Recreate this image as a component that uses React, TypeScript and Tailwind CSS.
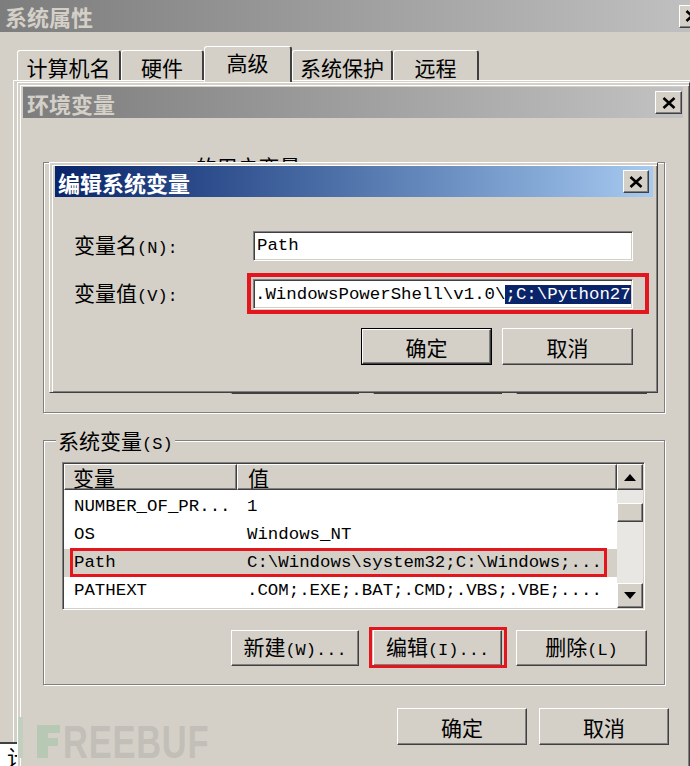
import React from "react";

const ZH = "font-['Noto_Sans_CJK_SC','Noto_Sans',sans-serif]";
const MONO = "font-['Liberation_Mono','Noto_Sans_CJK_SC',monospace]";

const RAISED =
  "border border-t-white border-l-white border-r-[#404040] border-b-[#404040] shadow-[inset_-1px_-1px_0_#808080]";
const SUNKEN =
  "border border-t-[#808080] border-l-[#808080] border-r-white border-b-white shadow-[inset_1px_1px_0_#404040,inset_-1px_-1px_0_#d4d0c8]";
const FRAME =
  "border border-t-white border-l-white border-r-[#404040] border-b-[#404040] shadow-[inset_2px_2px_0_#d4d0c8,inset_3px_3px_0_#ffffff,inset_-1px_-1px_0_#808080]";

function Mix({ zh, en, pre }: { zh: string; en?: string; pre?: string }) {
  return (
    <span className="inline-flex items-baseline whitespace-nowrap text-black leading-[28px]">
      {pre && <span className={`${MONO} text-[17px] leading-[28px]`}>{pre}</span>}
      <span className={`${ZH} text-[21px] leading-[28px]`}>{zh}</span>
      {en && <span className={`${MONO} text-[17px] leading-[28px]`}>{en}</span>}
    </span>
  );
}

function CloseBtn({ className }: { className: string }) {
  return (
    <div className={`flex items-center justify-center bg-[#d4d0c8] ${RAISED} ${className}`}>
      <svg width="14" height="12" viewBox="0 0 14 12">
        <path d="M1.5 1 L12.5 11 M12.5 1 L1.5 11" stroke="#000" strokeWidth="2.6" />
      </svg>
    </div>
  );
}

function Btn({
  children,
  className,
  def,
}: {
  children: React.ReactNode;
  className: string;
  def?: boolean;
}) {
  return (
    <div className={`flex bg-[#d4d0c8] ${def ? "border border-black" : ""} ${className}`}>
      <div className={`flex-1 flex items-center justify-center ${RAISED}`}>{children}</div>
    </div>
  );
}

function Tab({ label, w, sel }: { label: string; w: string; sel?: boolean }) {
  return (
    <div
      className={`${w} ${
        sel ? "h-[36px] -mb-[2px] pb-[5px]" : "h-[30px] pt-[3px]"
      } flex items-center justify-center bg-[#d4d0c8] border-t border-l border-white border-r-2 border-r-[#404040] rounded-t-[3px]`}
    >
      <span className={`${ZH} text-[21px] leading-[26px] text-black`}>{label}</span>
    </div>
  );
}

function Arrow({ up }: { up?: boolean }) {
  return (
    <svg width="12" height="7" viewBox="0 0 12 7">
      <polygon points={up ? "6,0 12,7 0,7" : "0,0 12,0 6,7"} fill="#000" />
    </svg>
  );
}

const rows: [string, string][] = [
  ["NUMBER_OF_PR...", "1"],
  ["OS", "Windows_NT"],
  ["Path", "C:\\Windows\\system32;C:\\Windows;..."],
  ["PATHEXT", ".COM;.EXE;.BAT;.CMD;.VBS;.VBE;...."],
];

const RED = "border-[#e3161d]";

export default function App() {
  return (
    <div className="relative w-[690px] h-[766px] overflow-hidden bg-[#d4d0c8] select-none">
      {/* Outer window: 系统属性 */}
      <div className="absolute left-0 top-0 w-[710px] h-[766px] flex flex-col">
        <div className="h-[32px] shrink-0 flex items-center pl-[5px] pr-[5px] bg-linear-to-r from-[#7d7d7d] to-[#c2c2c2]">
          <span className={`${ZH} text-[22px] font-bold leading-none text-[#d4d0c8]`}>系统属性</span>
          <CloseBtn className="ml-auto w-[26px] h-[23px]" />
        </div>
        <div className="mt-[18px] pl-[17px] h-[30px] shrink-0 flex items-end relative z-10">
          <Tab label="计算机名" w="w-[104px]" />
          <Tab label="硬件" w="w-[83px]" />
          <Tab label="高级" w="w-[88px]" sel />
          <Tab label="系统保护" w="w-[101px]" />
          <Tab label="远程" w="w-[86px]" />
        </div>
        <div className="ml-[13px] h-[662px] shrink-0 border-t border-l border-white" />
        <div className="h-[2px] shrink-0 bg-[#404040]" />
        <div className="h-[22px] w-[18px] shrink-0 bg-white overflow-hidden pl-[7px]">
          <span className={`${ZH} text-[21px] leading-[24px] text-black`}>计</span>
        </div>
      </div>

      {/* 环境变量 window */}
      <div
        className={`absolute left-[17px] top-[82px] w-[673px] h-[700px] bg-[#d4d0c8] ${FRAME} pt-[4px] pl-[5px] pr-[6px] flex flex-col z-20`}
      >
        <div className="h-[31px] shrink-0 flex items-center pl-[4px] pr-[1px] bg-linear-to-r from-[#7d7d7d] to-[#c2c2c2]">
          <span className={`${ZH} text-[22px] font-bold leading-none text-[#d4d0c8]`}>环境变量</span>
          <CloseBtn className="ml-auto w-[27px] h-[23px]" />
        </div>
        <div className="flex flex-col pl-[20px] pr-[18px]">
          {/* user variables group (mostly hidden) */}
          <div className="relative mt-[44px] h-[251px] border border-[#808080] shadow-[inset_1px_1px_0_#fff,1px_1px_0_#fff] flex flex-col pr-[17px]">
            <span className="absolute left-[17px] -top-[11px] px-[2px] bg-[#d4d0c8]">
              <Mix pre="Administrator " zh="的用户变量" en="(U)" />
            </span>
            <div className="flex-1" />
            <div className="flex justify-end gap-[14px] pb-[18px]">
              <Btn className="w-[128px] h-[36px]">
                <Mix zh="新建" en="(N)..." />
              </Btn>
              <Btn className="w-[129px] h-[36px]">
                <Mix zh="编辑" en="(E)..." />
              </Btn>
              <Btn className="w-[131px] h-[36px]">
                <Mix zh="删除" en="(D)" />
              </Btn>
            </div>
          </div>

          {/* system variables group */}
          <div className="relative mt-[27px] h-[245px] border border-[#808080] shadow-[inset_1px_1px_0_#fff,1px_1px_0_#fff] flex flex-col pt-[21px] pl-[18px] pr-[17px]">
            <span className="absolute left-[12px] -top-[15px] px-[2px] bg-[#d4d0c8]">
              <Mix zh="系统变量" en="(S)" />
            </span>

            {/* list view */}
            <div className={`mr-[2px] h-[148px] bg-white flex ${SUNKEN} p-[1px]`}>
              <div className="flex-1 flex flex-col">
                <div className="h-[26px] flex bg-[#d4d0c8]">
                  <div className={`w-[173px] flex items-center pl-[8px] ${RAISED}`}>
                    <span className={`${ZH} text-[21px] leading-none text-black`}>变量</span>
                  </div>
                  <div className={`flex-1 flex items-center pl-[10px] ${RAISED}`}>
                    <span className={`${ZH} text-[21px] leading-none text-black`}>值</span>
                  </div>
                </div>
                <div className="pt-[3px] flex flex-col">
                  {rows.map(([k, v], i) => (
                    <div
                      key={k}
                      className={`relative h-[28px] flex items-center ${
                        i === 2 ? "bg-[#d4d0c8]" : "bg-white"
                      }`}
                    >
                      <div className={`w-[173px] pl-[10px] ${MONO} text-[17.4px] leading-none text-black whitespace-nowrap`}>
                        {k}
                      </div>
                      <div className={`flex-1 pl-[10px] ${MONO} text-[17.4px] leading-none text-black whitespace-nowrap`}>
                        {v}
                      </div>
                      {i === 2 && (
                        <div className={`absolute left-[6px] right-[10px] -top-[1px] bottom-0 border-[3px] ${RED}`} />
                      )}
                    </div>
                  ))}
                </div>
              </div>
              {/* scrollbar */}
              <div className="w-[26px] flex flex-col bg-[#e9e7e3]">
                <div className={`h-[26px] flex items-center justify-center bg-[#d4d0c8] ${RAISED}`}>
                  <Arrow up />
                </div>
                <div className="h-[13px]" />
                <div className={`h-[19px] bg-[#d4d0c8] ${RAISED}`} />
                <div className="flex-1" />
                <div className={`h-[25px] flex items-center justify-center bg-[#d4d0c8] ${RAISED}`}>
                  <Arrow />
                </div>
              </div>
            </div>

            <div className="mt-[20px] flex justify-end gap-[14px]">
              <Btn className="w-[128px] h-[36px]">
                <Mix zh="新建" en="(W)..." />
              </Btn>
              <div className="relative">
                <Btn className="w-[129px] h-[36px]">
                  <Mix zh="编辑" en="(I)..." />
                </Btn>
                <div className={`absolute -left-[4px] -right-[5px] -top-[3px] -bottom-[2px] border-[3px] ${RED}`} />
              </div>
              <Btn className="w-[131px] h-[36px]">
                <Mix zh="删除" en="(L)" />
              </Btn>
            </div>
          </div>

          <div className="mt-[23px] -mr-[4px] flex justify-end gap-[12px]">
            <Btn className="w-[130px] h-[37px]">
              <Mix zh="确定" />
            </Btn>
            <Btn className="w-[130px] h-[37px]">
              <Mix zh="取消" />
            </Btn>
          </div>
        </div>
      </div>

      {/* 编辑系统变量 dialog */}
      <div
        className={`absolute left-[49px] top-[162px] w-[609px] h-[231px] bg-[#d4d0c8] ${FRAME} pt-[3px] pl-[5px] pr-[4px] flex flex-col z-30`}
      >
        <div className="h-[31px] shrink-0 flex items-center pl-[3px] pr-[4px] bg-linear-to-r from-[#0a246a] to-[#a6caf0]">
          <span className={`${ZH} text-[22px] font-bold leading-none text-white`}>编辑系统变量</span>
          <CloseBtn className="ml-auto w-[26px] h-[23px]" />
        </div>
        <div className="flex flex-col pl-[19px] pr-[20px]">
          <div className="mt-[34px] h-[30px] flex items-center">
            <div className="w-[179px] h-[30px] flex items-center">
              <Mix zh="变量名" en="(N):" />
            </div>
            <div className={`w-[380px] h-[30px] bg-white flex items-center pl-[3px] ${SUNKEN}`}>
              <span className={`${MONO} text-[17.4px] leading-none text-black`}>Path</span>
            </div>
          </div>
          <div className="mt-[18px] h-[30px] flex items-center">
            <div className="w-[179px] h-[30px] flex items-center">
              <Mix zh="变量值" en="(V):" />
            </div>
            <div className="relative h-[30px]">
              <div className={`w-[380px] h-[30px] bg-white flex items-center pl-[1px] overflow-hidden ${SUNKEN}`}>
                <span className={`${MONO} text-[17.4px] leading-[21px] text-black whitespace-nowrap`}>
                  {".WindowsPowerShell\\v1.0\\"}
                  <span className="bg-[#0a246a] text-white">{";C:\\Python27"}</span>
                </span>
              </div>
              <div className={`absolute -left-[6px] -right-[16px] -top-[6px] -bottom-[5px] border-[4px] ${RED}`} />
            </div>
          </div>
          <div className="mt-[19px] flex justify-end gap-[10px]">
            <Btn className="w-[131px] h-[37px]" def>
              <Mix zh="确定" />
            </Btn>
            <Btn className="w-[131px] h-[37px]">
              <Mix zh="取消" />
            </Btn>
          </div>
        </div>
      </div>

      {/* FREEBUF watermark */}
      <svg className="absolute left-[18px] top-[717px] z-40" width="44" height="42" viewBox="0 0 44 42">
        <rect x="0" y="0" width="5" height="41" fill="#c0cfbe" />
        <rect x="19" y="8" width="23" height="8" fill="#b7c8b5" />
        <rect x="19" y="21" width="21" height="8" fill="#b7c8b5" />
        <rect x="19" y="8" width="11" height="33" fill="#b7c8b5" />
      </svg>
      <span className="absolute left-[63px] top-[719px] z-40 origin-left scale-x-[0.75] font-['Liberation_Sans',sans-serif] font-bold text-[46px] leading-none text-[#c2bfb8] tracking-[1px]">
        REEBUF
      </span>
    </div>
  );
}
